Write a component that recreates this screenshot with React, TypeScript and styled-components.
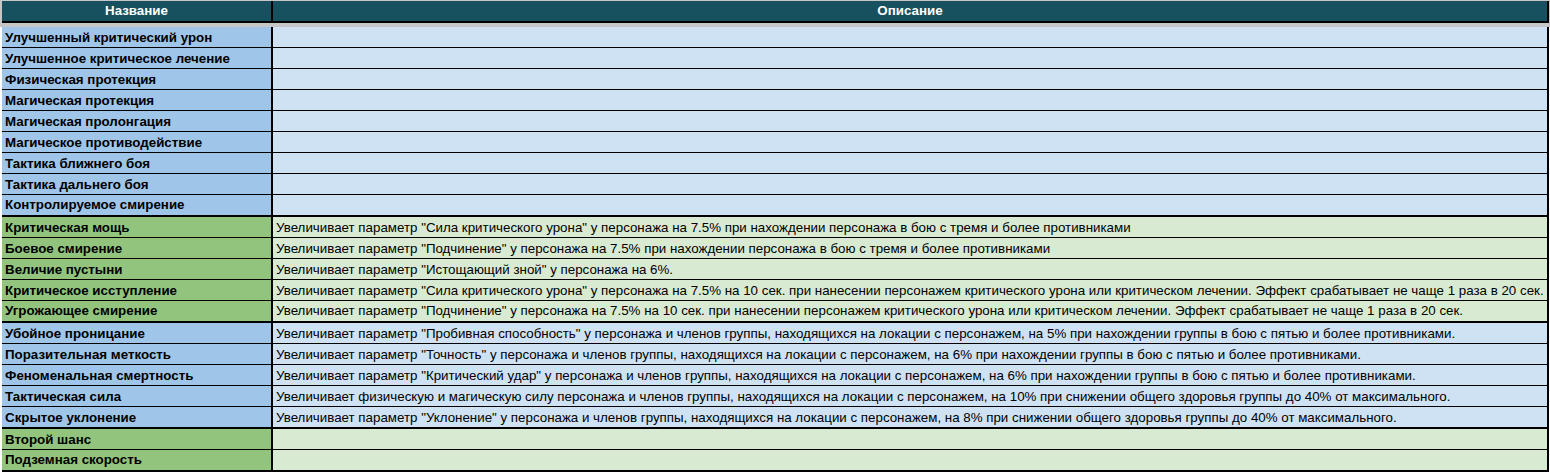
import React from "react";
import styled, { createGlobalStyle } from "styled-components";

const Global = createGlobalStyle`
  html, body { margin: 0; padding: 0; background: #fff; }
  body { width: 1550px; height: 474px; overflow: hidden; font-family: "Liberation Sans", Arial, sans-serif; }
`;

const Sheet = styled.div`
  width: 1550px;
  height: 474px;
  padding-top: 1px;
  box-sizing: border-box;
  background: linear-gradient(#c6c6c6 0 27px, #fff 27px);
  display: flex;
  flex-direction: column;
`;

const Head = styled.div`
  display: grid;
  grid-template-columns: 269px 1274px;
  grid-template-rows: minmax(0, 1fr);
  column-gap: 2px;
  margin-left: 2px;
  height: 22px;
  background: #000;
  width: 1547px;
  padding-bottom: 2px;
  box-sizing: border-box;
  margin-bottom: 4px;
`;

const HeadCell = styled.div`
  background: #17505e;
  color: #fff;
  font-size: 13.33px;
  font-weight: 700;
  text-align: center;
  line-height: 20px;
  overflow: hidden;
`;

const Row = styled.div<{ $thick?: boolean; $h: number }>`
  display: grid;
  grid-template-columns: 269px 1274px;
  grid-template-rows: minmax(0, 1fr);
  column-gap: 2px;
  margin-left: 2px;
  width: 1547px;
  height: ${(p) => p.$h}px;
  flex: none;
  box-sizing: border-box;
  background: #000;
  padding-bottom: ${(p) => (p.$thick ? 2 : 1)}px;
`;

const Name = styled.div<{ $tone: "blue" | "green"; $up?: boolean }>`
  background: ${(p) => (p.$tone === "blue" ? "#9fc5e8" : "#93c47d")};
  color: #000;
  font-size: 13.33px;
  font-weight: 700;
  padding-left: 3px;
  line-height: ${(p) => (p.$up ? 19 : 21)}px;
  white-space: nowrap;
  overflow: hidden;
`;

const Desc = styled.div<{ $tone: "blue" | "green"; $up?: boolean }>`
  background: ${(p) => (p.$tone === "blue" ? "#cfe2f3" : "#d9ead3")};
  color: #000;
  font-size: 13.33px;
  padding-left: 3px;
  line-height: ${(p) => (p.$up ? 19 : 21)}px;
  white-space: nowrap;
  overflow: hidden;
`;

type Tone = "blue" | "green";
type Item = { name: string; desc?: string; tone: Tone; end?: boolean; up?: boolean };

const rows: Item[] = [
  { name: "Улучшенный критический урон", tone: "blue" },
  { name: "Улучшенное критическое лечение", tone: "blue" },
  { name: "Физическая протекция", tone: "blue" },
  { name: "Магическая протекция", tone: "blue" },
  { name: "Магическая пролонгация", tone: "blue" },
  { name: "Магическое противодействие", tone: "blue" },
  { name: "Тактика ближнего боя", tone: "blue" },
  { name: "Тактика дальнего боя", tone: "blue" },
  { name: "Контролируемое смирение", tone: "blue", end: true, up: true },
  { name: "Критическая мощь", tone: "green", desc: 'Увеличивает параметр "Сила критического урона" у персонажа на 7.5% при нахождении персонажа в бою с тремя и более противниками' },
  { name: "Боевое смирение", tone: "green", desc: 'Увеличивает параметр "Подчинение" у персонажа на 7.5% при нахождении персонажа в бою с тремя и более противниками' },
  { name: "Величие пустыни", tone: "green", desc: 'Увеличивает параметр "Истощающий зной" у персонажа на 6%.' },
  { name: "Критическое исступление", tone: "green", desc: 'Увеличивает параметр "Сила критического урона" у персонажа на 7.5% на 10 сек. при нанесении персонажем критического урона или критическом лечении. Эффект срабатывает не чаще 1 раза в 20 сек.' },
  { name: "Угрожающее смирение", tone: "green", end: true, up: true, desc: 'Увеличивает параметр "Подчинение" у персонажа на 7.5% на 10 сек. при нанесении персонажем критического урона или критическом лечении. Эффект срабатывает не чаще 1 раза в 20 сек.' },
  { name: "Убойное проницание", tone: "blue", desc: 'Увеличивает параметр "Пробивная способность" у персонажа и членов группы, находящихся на локации с персонажем, на 5% при нахождении группы в бою с пятью и более противниками.' },
  { name: "Поразительная меткость", tone: "blue", desc: 'Увеличивает параметр "Точность" у персонажа и членов группы, находящихся на локации с персонажем, на 6% при нахождении группы в бою с пятью и более противниками.' },
  { name: "Феноменальная смертность", tone: "blue", desc: 'Увеличивает параметр "Критический удар" у персонажа и членов группы, находящихся на локации с персонажем, на 6% при нахождении группы в бою с пятью и более противниками.' },
  { name: "Тактическая сила", tone: "blue", desc: 'Увеличивает физическую и магическую силу персонажа и членов группы, находящихся на локации с персонажем, на 10% при снижении общего здоровья группы до 40% от максимального.' },
  { name: "Скрытое уклонение", tone: "blue", end: true, desc: 'Увеличивает параметр "Уклонение" у персонажа и членов группы, находящихся на локации с персонажем, на 8% при снижении общего здоровья группы до 40% от максимального.' },
  { name: "Второй шанс", tone: "green" },
  { name: "Подземная скорость", tone: "green", end: true, up: true },
];

export default function App() {
  return (
    <>
      <Global />
      <Sheet>
        <Head>
          <HeadCell>Название</HeadCell>
          <HeadCell>Описание</HeadCell>
        </Head>
        {rows.map((r) => (
          <Row key={r.name} $h={r.end ? 22 : 21} $thick={r.end}>
            <Name $tone={r.tone} $up={r.up}>{r.name}</Name>
            <Desc $tone={r.tone} $up={r.up}>{r.desc}</Desc>
          </Row>
        ))}
      </Sheet>
    </>
  );
}
